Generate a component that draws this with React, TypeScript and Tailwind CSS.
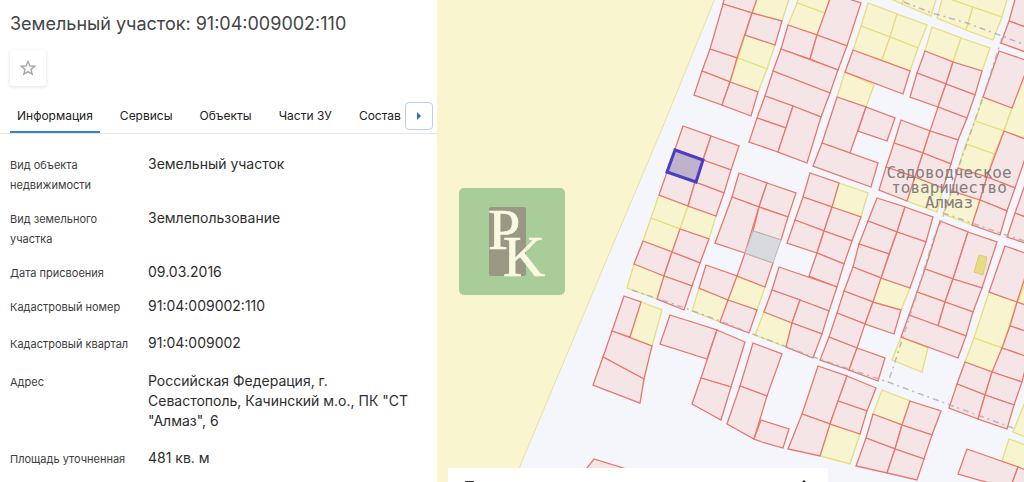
import { useState } from "react";

const TABS = ["Информация", "Сервисы", "Объекты", "Части ЗУ", "Состав"];

const MAIN_FIELDS = [
  { label: "Вид объекта недвижимости", value: "Земельный участок" },
  { label: "Вид земельного участка", value: "Землепользование" },
  { label: "Дата присвоения", value: "09.03.2016" },
  { label: "Кадастровый номер", value: "91:04:009002:110" },
];

const LOCATION_FIELDS = [
  { label: "Кадастровый квартал", value: "91:04:009002" },
  {
    label: "Адрес",
    value: 'Российская Федерация, г. Севастополь, Качинский м.о., ПК "СТ "Алмаз", 6',
  },
  { label: "Площадь уточненная", value: "481 кв. м" },
];

// parcels with a registered owner
const RED_PARCELS = [
  "725,-4 723,4 752,13 758,-4",
  "723,4 752,13 737,58 710,49",
  "752,13 782,21 775,45 745,35",
  "710,49 737,58 730,82 702,71",
  "702,71 730,82 722,105 694,95",
  "730,82 758,92 751,116 722,105",
  "831,-4 817,35 847,46 861,3 840,-4",
  "788,25 817,35 810,59 781,49",
  "817,35 847,46 838,70 810,59",
  "781,49 838,70 830,93 773,71",
  "773,71 830,93 821,117 765,96",
  "765,96 793,106 786,128 757,118",
  "757,118 786,128 778,152 749,142",
  "793,106 821,117 807,163 778,152",
  "853,50 910,71 903,94 845,72",
  "837,97 866,107 850,153 822,143",
  "866,107 895,118 887,141 858,131",
  "822,143 878,163 871,187 813,166",
  "925,51 953,62 946,84 917,73",
  "953,62 982,71 975,95 946,84",
  "917,73 946,84 938,107 910,97",
  "946,84 975,95 967,118 938,107",
  "938,107 967,118 958,140 930,131",
  "901,120 930,131 923,153 894,143",
  "930,131 958,140 951,164 923,153",
  "894,143 923,153 915,177 886,167",
  "923,153 951,164 943,188 915,177",
  "886,167 915,177 907,201 879,190",
  "1016,-4 1009,21 1028,28 1028,-4",
  "1009,21 1028,28 1028,53 1001,43",
  "999,51 1028,61 1028,66 1012,108 983,97",
  "1004,131 1028,140 1028,150 1015,188 987,177",
  "958,168 987,177 980,200 952,191",
  "987,177 1015,188 1007,211 980,200",
  "980,200 1007,211 1000,235 972,225",
  "1028,176 1015,213 1028,218",
  "1015,213 1028,218 1028,244 1007,237",
  "683,126 711,136 703,160 675,149",
  "711,136 739,146 731,170 703,160",
  "703,160 731,170 724,193 695,182",
  "667,172 695,182 688,206 659,195",
  "695,182 724,193 716,216 688,206",
  "680,229 709,239 700,263 672,252",
  "643,241 672,252 664,276 634,264",
  "672,252 700,263 692,286 664,276",
  "664,276 692,286 684,310 657,299",
  "739,173 767,183 759,207 732,197",
  "767,183 796,193 788,217 759,207",
  "732,197 759,207 745,253 715,243",
  "759,207 788,217 781,240 753,231",
  "745,253 773,263 765,287 737,276",
  "706,265 737,276 728,300 699,288",
  "728,300 757,310 749,333 720,322",
  "810,173 839,183 832,207 803,197",
  "803,197 832,207 824,231 795,220",
  "832,207 861,217 852,241 824,231",
  "795,220 824,231 817,253 787,243",
  "824,231 852,241 844,264 817,253",
  "817,253 844,264 837,287 809,276",
  "779,267 837,287 829,311 772,290",
  "772,290 800,300 792,323 764,312",
  "800,300 829,311 822,334 792,323",
  "792,323 822,334 813,358 786,347",
  "877,198 905,207 897,232 868,221",
  "905,207 933,217 926,242 897,232",
  "868,221 897,232 889,254 859,244",
  "897,232 926,242 910,288 881,278",
  "859,244 889,254 881,278 853,267",
  "853,267 881,278 873,302 844,291",
  "844,291 873,302 865,324 837,313",
  "873,302 901,310 894,334 865,324",
  "837,313 865,324 857,348 829,337",
  "829,337 857,348 849,370 820,360",
  "857,348 885,358 878,381 849,370",
  "940,221 968,232 953,279 925,269",
  "968,232 997,242 982,288 953,279",
  "925,269 953,279 945,302 917,292",
  "953,279 982,288 973,312 945,302",
  "917,292 945,302 938,326 909,315",
  "945,302 973,312 966,336 938,326",
  "909,315 966,336 958,358 901,337",
  "1005,246 1028,254 1028,268 1017,302 989,292",
  "1017,302 1028,306 1028,332 1010,326",
  "1010,326 1028,332 1028,357 1002,348",
  "1002,348 1028,357 1022,382 992,372",
  "965,362 992,372 985,395 957,384",
  "992,372 1022,382 1014,405 985,395",
  "957,384 985,395 978,419 949,408",
  "985,395 1014,405 1007,429 978,419",
  "967,449 1018,467 1010,489 958,474",
  "1018,467 1028,471 1028,495 1010,489",
  "910,401 941,411 932,435 902,425",
  "873,414 902,425 895,449 866,438",
  "902,425 932,435 924,459 895,449",
  "866,438 895,449 887,473 856,466",
  "895,449 924,459 917,480 887,473",
  "818,366 847,376 830,424 802,414",
  "847,376 876,388 867,411 838,401",
  "838,401 867,411 860,434 830,424",
  "802,414 830,424 820,456 788,449",
  "624,296 641,302 630,337 612,331",
  "612,331 652,346 644,379 603,357",
  "603,357 644,379 640,403 593,385",
  "670,315 717,330 707,359 660,344",
  "717,330 745,342 731,387 701,378",
  "701,378 731,387 721,420 692,404",
  "753,343 782,354 767,396 740,386",
  "740,386 767,396 754,439 727,424",
  "761,420 789,429 783,448 762,442 754,439",
  "587,468 594,459 626,469 620,490 580,490",
];

const YELLOW_PARCELS = [
  "758,-4 752,13 782,21 790,-4",
  "745,35 775,45 767,69 738,58",
  "738,58 767,69 758,92 730,82",
  "799,-4 797,3 825,13 831,-4",
  "797,3 825,13 817,35 788,25",
  "868,3 897,14 890,37 861,26",
  "897,14 927,25 918,48 890,37",
  "861,26 890,37 882,60 853,50",
  "890,37 918,48 910,71 882,60",
  "845,72 874,85 866,107 837,97",
  "884,-4 902,4 905,-4",
  "905,-4 902,4 931,16 937,-4",
  "932,27 961,38 953,62 925,51",
  "961,38 990,48 982,71 953,62",
  "943,-4 950,-1 973,7 966,30 937,18",
  "973,7 1002,17 993,40 966,30",
  "950,-1 1002,17 1008,-4",
  "915,177 943,188 937,212 907,201",
  "983,97 1012,108 1004,131 975,121",
  "1012,108 1028,66 1028,140 1004,131",
  "975,121 1004,131 994,154 966,144",
  "966,144 994,154 987,177 958,168",
  "952,191 980,200 972,225 943,214",
  "659,195 688,206 680,229 651,218",
  "688,206 716,216 709,239 680,229",
  "651,218 680,229 672,252 643,241",
  "634,264 664,276 657,299 627,288",
  "737,276 765,287 757,310 728,300",
  "699,288 728,300 720,322 692,311",
  "839,183 868,193 861,217 832,207",
  "764,312 792,323 786,347 755,335",
  "881,278 910,288 901,310 873,302",
  "901,337 928,348 922,372 892,360",
  "989,292 1017,302 1002,348 974,338",
  "974,338 1002,348 992,372 965,362",
  "1028,275 1018,302 1028,306",
  "1025,402 1013,432 1028,438",
  "1009,439 1028,446 1028,471 1002,461",
  "882,390 910,401 902,425 873,414",
  "830,424 860,434 850,464 820,456",
  "641,302 662,310 652,346 630,337",
];

const BOUNDARIES = [
  "904,2 932,13 967,23 1002,36 1028,46",
  "1002,38 983,97 960,163 943,217 933,240 915,300 893,368 888,382",
  "632,290 685,308 720,321 750,333 787,347 813,357 888,382 950,405 1013,428",
  "943,213 1000,233 1028,242",
];

function StarIcon() {
  return (
    <svg viewBox="0 0 24 24" className="h-5 w-5" fill="#a3a3a3" aria-hidden="true">
      <path d="M22 9.24l-7.19-.62L12 2 9.19 8.63 2 9.24l5.46 4.73L5.82 21 12 17.27 18.18 21l-1.63-7.03L22 9.24zM12 15.4l-3.76 2.27 1-4.28-3.32-2.88 4.38-.38L12 6.1l1.71 4.04 4.38.38-3.32 2.88 1 4.28L12 15.4z" />
    </svg>
  );
}

function FieldList({ fields }: { fields: { label: string; value: string }[] }) {
  return (
    <>
      {fields.map((field) => (
        <div key={field.label} className="flex">
          <dt className="w-[138px] shrink-0 pt-px pr-3 text-[11px] leading-5 text-[#3d3d3d]">
            {field.label}
          </dt>
          <dd className="min-w-0 max-w-[270px] flex-1 text-[14px] leading-5 text-[#2e2e2e]">
            {field.value}
          </dd>
        </div>
      ))}
    </>
  );
}

function ObjectPanel() {
  const [activeTab, setActiveTab] = useState(TABS[0]);

  return (
    <section className="flex min-w-0 flex-col bg-white">
      <h1 className="px-[10px] pt-3 text-[18px] leading-6 text-[#444444]">
        Земельный участок: 91:04:009002:110
      </h1>

      <div className="px-[10px] pt-[14px]">
        <button
          aria-label="В избранное"
          className="flex h-9 w-9 items-center justify-center rounded bg-white shadow-[0_1px_4px_rgba(0,0,0,0.12)]"
        >
          <StarIcon />
        </button>
      </div>

      <div className="mt-4 flex items-start justify-between border-b border-[#e3e6ea] pr-1 pl-[10px]">
        <div role="tablist" className="flex min-w-0 gap-[13px] overflow-hidden">
          {TABS.map((tab) => (
            <button
              key={tab}
              role="tab"
              aria-selected={tab === activeTab}
              onClick={() => setActiveTab(tab)}
              className={
                tab === activeTab
                  ? "h-[31px] shrink-0 border-b-2 border-[#2f86c9] px-[7px] pb-[2px] text-[12px] leading-5 text-[#222222]"
                  : "h-[31px] shrink-0 border-b-2 border-transparent px-[7px] pb-[2px] text-[12px] leading-5 text-[#222222]"
              }
            >
              {tab}
            </button>
          ))}
        </div>
        <button
          aria-label="Следующие вкладки"
          className="flex h-7 w-7 shrink-0 items-center justify-center rounded border border-[#b9cfee] bg-white"
        >
          <svg viewBox="0 0 4 8" className="h-2 w-1" fill="#2a6fd0" aria-hidden="true">
            <path d="M0 0l4 4-4 4z" />
          </svg>
        </button>
      </div>

      <dl className="flex flex-col gap-[13px] px-[10px] pt-5">
        <FieldList fields={MAIN_FIELDS} />
      </dl>
      <dl className="flex flex-col gap-[17px] px-[10px] pt-4">
        <FieldList fields={LOCATION_FIELDS} />
      </dl>
    </section>
  );
}

function CadastralMap() {
  return (
    <svg
      viewBox="437 0 587 482"
      preserveAspectRatio="xMinYMin slice"
      className="absolute inset-0 h-full w-full"
      role="img"
      aria-label="Кадастровая карта"
    >
      <rect x="437" width="600" height="490" fill="#f5f6fb" />
      <polygon
        points="430,-4 716,-4 664,124 617,235 580,323 510,490 430,490"
        fill="#f9f5cf"
        stroke="#e6e2a0"
      />

      <g fill="#f8f4cf" stroke="#e6de7c" strokeWidth="1.3">
        {YELLOW_PARCELS.map((points) => (
          <polygon key={points} points={points} />
        ))}
      </g>
      <g fill="#f6e5e7" stroke="#e9766c" strokeWidth="1.3">
        {RED_PARCELS.map((points) => (
          <polygon key={points} points={points} />
        ))}
      </g>

      <polygon points="753,231 781,240 773,263 745,253" fill="#d9dade" stroke="#b5bcc0" />
      <polygon points="979,255 987,257 983,275 974,272" fill="#e6dc84" stroke="#d8cd6c" />

      <g fill="none" stroke="#b0abad" strokeWidth="1.5" strokeDasharray="6 4 2 4" opacity="0.8">
        {BOUNDARIES.map((points) => (
          <polyline key={points} points={points} />
        ))}
      </g>

      {/* selected parcel */}
      <polygon
        points="675,150 703,160 696,182 667,172"
        fill="#beb3cb"
        stroke="#4a3cc4"
        strokeWidth="3"
      />

      <g
        className="font-['DejaVu_Sans_Mono',monospace] text-[16px]"
        fill="#857d7e"
        textAnchor="middle"
      >
        <text x="949" y="178">Садоводческое</text>
        <text x="949" y="193">товарищество</text>
        <text x="949" y="208">Алмаз</text>
      </g>

      <rect x="459" y="188" width="106" height="107" rx="5" fill="#a8cd98" />
      <rect x="489" y="207" width="37" height="69" rx="2" fill="#989885" />
      <g
        className="font-['Liberation_Serif',serif] text-[58px]"
        fill="#fbf8e0"
        stroke="#fbf8e0"
        strokeWidth="0.7"
      >
        <text x="488" y="249">P</text>
        <text x="503" y="276">K</text>
      </g>
    </svg>
  );
}

export default function App() {
  return (
    <main className="grid min-h-screen grid-cols-[437fr_587fr] font-[Inter,'Noto_Sans',sans-serif]">
      <ObjectPanel />

      <section className="relative min-w-0 overflow-hidden bg-[#f5f6fb]">
        <CadastralMap />
        <div className="absolute bottom-0 left-[11px] flex h-[14px] w-[380px] items-end justify-between bg-white pr-[22px] pl-[17px]">
          <svg viewBox="0 0 9 1" className="h-px w-[9px]" aria-hidden="true">
            <rect width="9" height="1" fill="#333333" />
          </svg>
          <svg viewBox="0 0 4 2" className="h-[2px] w-1" aria-hidden="true">
            <path d="M2 0l2 2H0z" fill="#222222" />
          </svg>
        </div>
      </section>
    </main>
  );
}
